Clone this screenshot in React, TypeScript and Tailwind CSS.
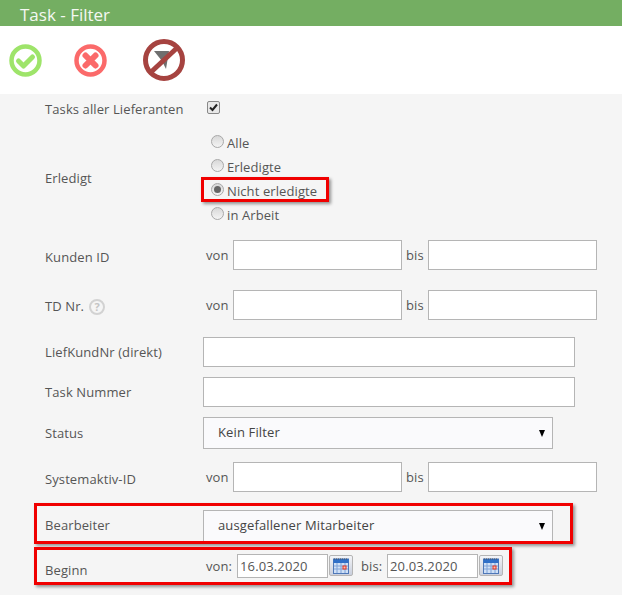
import type { ReactNode } from "react"

const font = "font-['Open_Sans',sans-serif]"
const label = "text-[13px] leading-[18px] text-[#555] tracking-[0.1px]"
const field = "h-[30px] border border-[#b5b5b5] bg-white"
const redBox = "absolute border-[3px] border-[#f00000] shadow-[2px_2px_3px_rgba(0,0,0,0.4)] pointer-events-none"

function Radio({ checked }: { checked?: boolean }) {
  return (
    <span className="w-[13px] h-[13px] rounded-full border border-[#a8a8a8] bg-gradient-to-b from-[#d8d8d8] to-[#f4f4f4] flex items-center justify-center mr-[3px] -mt-[3px] shrink-0">
      {checked && <span className="w-[7px] h-[7px] rounded-full bg-[#666]" />}
    </span>
  )
}

function Row({ title, className, labelClass = "", children }: { title: ReactNode; className: string; labelClass?: string; children: ReactNode }) {
  return (
    <div className={`relative flex items-center ${className}`}>
      <div className={`${label} w-[158px] shrink-0 ${labelClass}`}>{title}</div>
      {children}
    </div>
  )
}

function Range() {
  return (
    <div className="flex items-center">
      <span className={`${label} w-[27px] ml-[3px]`}>von</span>
      <div className={`${field} w-[169px]`} />
      <span className={`${label} w-[26px] pl-[4px]`}>bis</span>
      <div className={`${field} w-[169px]`} />
    </div>
  )
}

function Select({ value }: { value: string }) {
  return (
    <div className="h-[32px] w-[350px] border border-[#b5b5b5] bg-[#fafafc] flex items-center justify-between pl-[14px] pr-[7px] text-[13px] tracking-[0.13px] text-[#444]">
      <span>{value}</span>
      <span className="w-0 h-0 border-x-[3.5px] border-x-transparent border-t-[7px] border-t-black" />
    </div>
  )
}

function CalendarButton() {
  return (
    <div className="w-[24px] h-[21px] ml-[1px] self-start mt-[1px] border border-[#b5b5b5] rounded-[2px] bg-gradient-to-b from-[#f4f5f8] to-[#c9cfdd] flex items-center justify-center">
      <svg width="16" height="16" viewBox="0 0 16 16">
        <rect x="0.5" y="1" width="15" height="14.5" fill="#fff" stroke="#4f78b8" />
        <rect x="0.5" y="1" width="15" height="4" fill="#2f6fc8" />
        <path d="M1 1h14" stroke="#555" strokeDasharray="1 1" />
        <rect x="1" y="5" width="14" height="10" fill="#cfe0f6" />
        <path d="M1 8h14M1 11h14M4 5v10M8 5v10M12 5v10" stroke="#7fa2d8" strokeWidth="1" />
        <rect x="10" y="8" width="3" height="3" fill="#f6c0b0" stroke="#e03020" />
      </svg>
    </div>
  )
}

function DateInput({ value }: { value: string }) {
  return (
    <div className="w-[91px] h-[24px] border border-[#b5b5b5] bg-white pl-[2px] text-[13px] leading-[22px] tracking-[0.13px] text-[#555]">
      {value}
    </div>
  )
}

export default function App() {
  return (
    <div className={`${font} w-[622px] h-[595px] overflow-hidden bg-[#f5f5f5]`}>
      <div className="h-[26px] bg-[#74ae62] pl-[20px] text-[17px] leading-[30px] text-[#f4f8f2]">Task - Filter</div>

      <div className="h-[68px] bg-white flex items-start">
        <svg className="ml-[9px] mt-[18px]" width="33" height="33" viewBox="0 0 33 33">
          <circle cx="16.5" cy="16.5" r="14" fill="#fff" stroke="#9ee46a" strokeWidth="4.5" />
          <path d="M9.5 17l5 5 9-9" fill="none" stroke="#9ee46a" strokeWidth="5" strokeLinecap="round" strokeLinejoin="round" />
        </svg>
        <svg className="ml-[32px] mt-[18px]" width="33" height="33" viewBox="0 0 33 33">
          <circle cx="16.5" cy="16.5" r="14" fill="#fff" stroke="#fb6a6a" strokeWidth="4.5" />
          <path d="M11.5 11.5l10 10M21.5 11.5l-10 10" stroke="#fb6a6a" strokeWidth="6" strokeLinecap="round" />
        </svg>
        <svg className="ml-[36px] mt-[13px]" width="42" height="42" viewBox="0 0 42 42">
          <path d="M11 12H26L23 30L19 22Z" fill="#6f6f6f" />
          <circle cx="21" cy="21" r="18.5" fill="none" stroke="#a64340" strokeWidth="5" />
          <path d="M7 34L35 8" stroke="#a64340" strokeWidth="5" />
        </svg>
      </div>

      <div className="pl-[45px]">
        <Row title="Tasks aller Lieferanten" className="h-[18px] mt-[6px]">
          <span className="w-[13px] h-[13px] ml-[4px] -mt-[3px] rounded-[2px] border border-[#888] bg-[#e8e8e8] flex items-center justify-center">
            <svg width="9" height="9" viewBox="0 0 9 9">
              <path d="M1 4.5l2.5 2.5L8 1.5" fill="none" stroke="#222" strokeWidth="2" />
            </svg>
          </span>
        </Row>

        <Row title="Erledigt" className="h-[96px] mt-[13px]" labelClass="-mt-[2px]">
          <div className="relative flex flex-col ml-[8px]">
            {["Alle", "Erledigte", "Nicht erledigte", "in Arbeit"].map((item, i) => (
              <div key={item} className={`${label} h-[24px] flex items-center`}>
                <Radio checked={i === 2} />
                <span>{item}</span>
              </div>
            ))}
            <div className={`${redBox} left-[-10px] top-[46px] w-[128px] h-[25px]`} />
          </div>
        </Row>

        <Row title="Kunden ID" className="h-[30px] mt-[13px]" labelClass="pt-[4px]">
          <Range />
        </Row>
        <Row
          title={
            <span className="flex items-center">
              TD Nr.
              <span className="ml-[5px] mt-[1px] w-[16px] h-[16px] rounded-full border-2 border-[#d2d2d2] text-[#c4c4c4] text-[11px] leading-[12px] font-bold text-center">?</span>
            </span>
          }
          className="h-[30px] mt-[20px]"
          labelClass="pt-[2px]"
        >
          <Range />
        </Row>
        <Row title="LiefKundNr (direkt)" className="h-[30px] mt-[17px]">
          <div className={`${field} w-[372px]`} />
        </Row>
        <Row title="Task Nummer" className="h-[30px] mt-[10px]">
          <div className={`${field} w-[372px]`} />
        </Row>
        <Row title="Status" className="h-[32px] mt-[10px]">
          <Select value="Kein Filter" />
        </Row>
        <Row title="Systemaktiv-ID" className="h-[30px] mt-[13px]" labelClass="pt-[4px]">
          <Range />
        </Row>
        <Row title="Bearbeiter" className="h-[32px] mt-[18px]" labelClass="-mt-[2px]">
          <Select value="ausgefallener Mitarbeiter" />
          <div className={`${redBox} left-[-11px] top-[-7px] w-[539px] h-[41px]`} />
        </Row>
        <Row title="Beginn" className="h-[24px] mt-[12px]" labelClass="pt-[8px]">
          <span className={`${label} w-[31px] ml-[3px]`}>von:</span>
          <DateInput value="16.03.2020" />
          <CalendarButton />
          <span className={`${label} w-[26px] ml-[8px]`}>bis:</span>
          <DateInput value="20.03.2020" />
          <CalendarButton />
          <div className={`${redBox} left-[-11px] top-[-7px] w-[478px] h-[38px]`} />
        </Row>
      </div>
    </div>
  )
}
